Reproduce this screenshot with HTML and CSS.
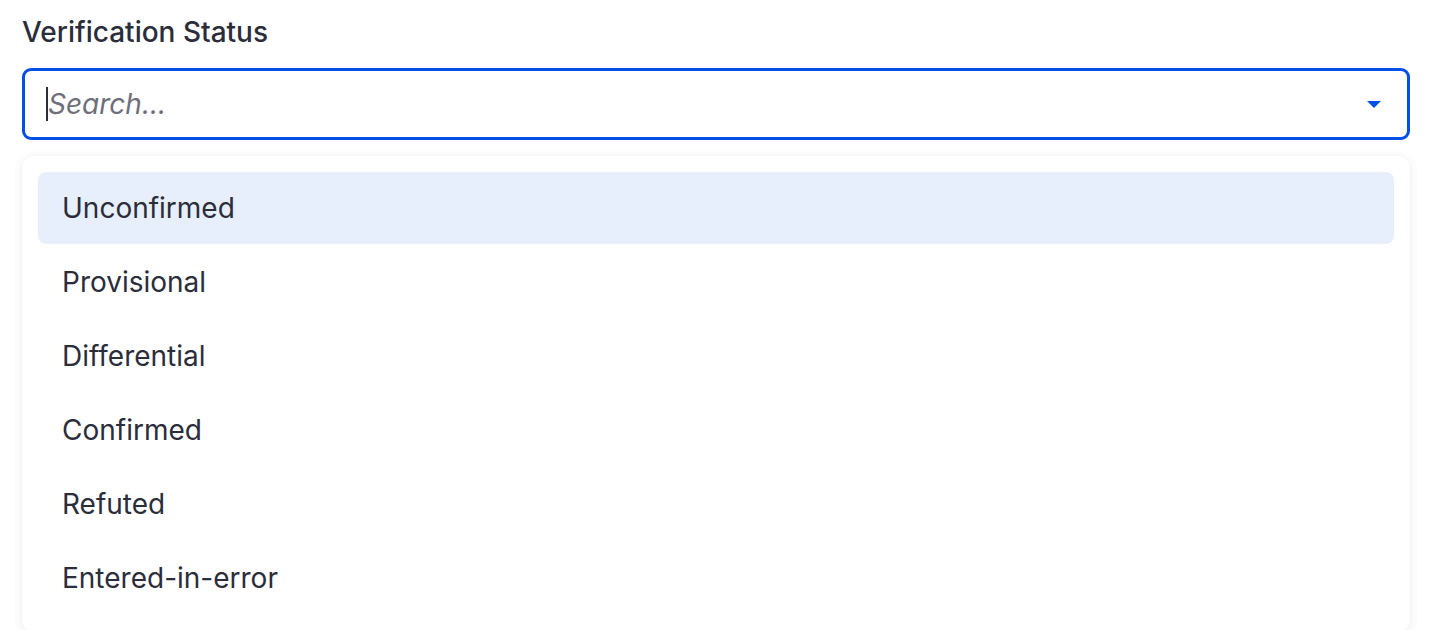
FILE: index.html
```html
<!DOCTYPE html>
<html lang="en">
<head>
<meta charset="utf-8">
<title>Verification Status</title>
<link rel="stylesheet" href="styles.css">
</head>
<body>
<div class="field">
  <label class="label">Verification Status</label>
  <div class="select">
    <div class="search"><span class="caret"></span><span class="placeholder">Search...</span></div>
    <svg class="arrow" width="14" height="7" viewBox="0 0 14 7"><path d="M0 0H14L7 7Z" fill="#0050e6"/></svg>
  </div>
  <ul class="menu">
    <li class="option active">Unconfirmed</li>
    <li class="option">Provisional</li>
    <li class="option">Differential</li>
    <li class="option">Confirmed</li>
    <li class="option">Refuted</li>
    <li class="option">Entered-in-error</li>
  </ul>
</div>
</body>
</html>
```
FILE: styles.css
```css
html, body {
  margin: 0;
  padding: 0;
  background: #ffffff;
}
body {
  font-family: Inter, "Noto Sans", sans-serif;
  color: #2b2d3b;
  overflow: hidden;
}
.field {
  padding: 14px 46px 0 22px;
  display: flex;
  flex-direction: column;
}
.label {
  font-size: 28px;
  font-weight: 500;
  line-height: 36px;
  color: #2b2d3b;
  margin-bottom: 18px;
}
.select {
  height: 72px;
  box-sizing: border-box;
  border: 3px solid #0050e6;
  border-radius: 9px;
  display: flex;
  align-items: center;
  padding: 0 26px 0 21px;
}
.search {
  flex: 1;
  display: flex;
  align-items: center;
}
.caret {
  width: 2px;
  height: 34px;
  background: #2b2d3b;
}
.placeholder {
  font-size: 28px;
  font-style: italic;
  color: #6e6f7b;
}
.menu {
  list-style: none;
  margin: 16px 0 0 0;
  padding: 16px;
  border-radius: 12px;
  background: #fff;
  box-shadow: 0 2px 12px rgba(0, 0, 0, 0.08), 0 0 2px rgba(0,0,0,0.04);
}
.option {
  height: 72px;
  margin-bottom: 2px;
  padding-left: 24px;
  display: flex;
  align-items: center;
  border-radius: 8px;
  font-size: 28px;
  color: #2b2d3b;
}
.option.active {
  background: #e8effc;
}
```
